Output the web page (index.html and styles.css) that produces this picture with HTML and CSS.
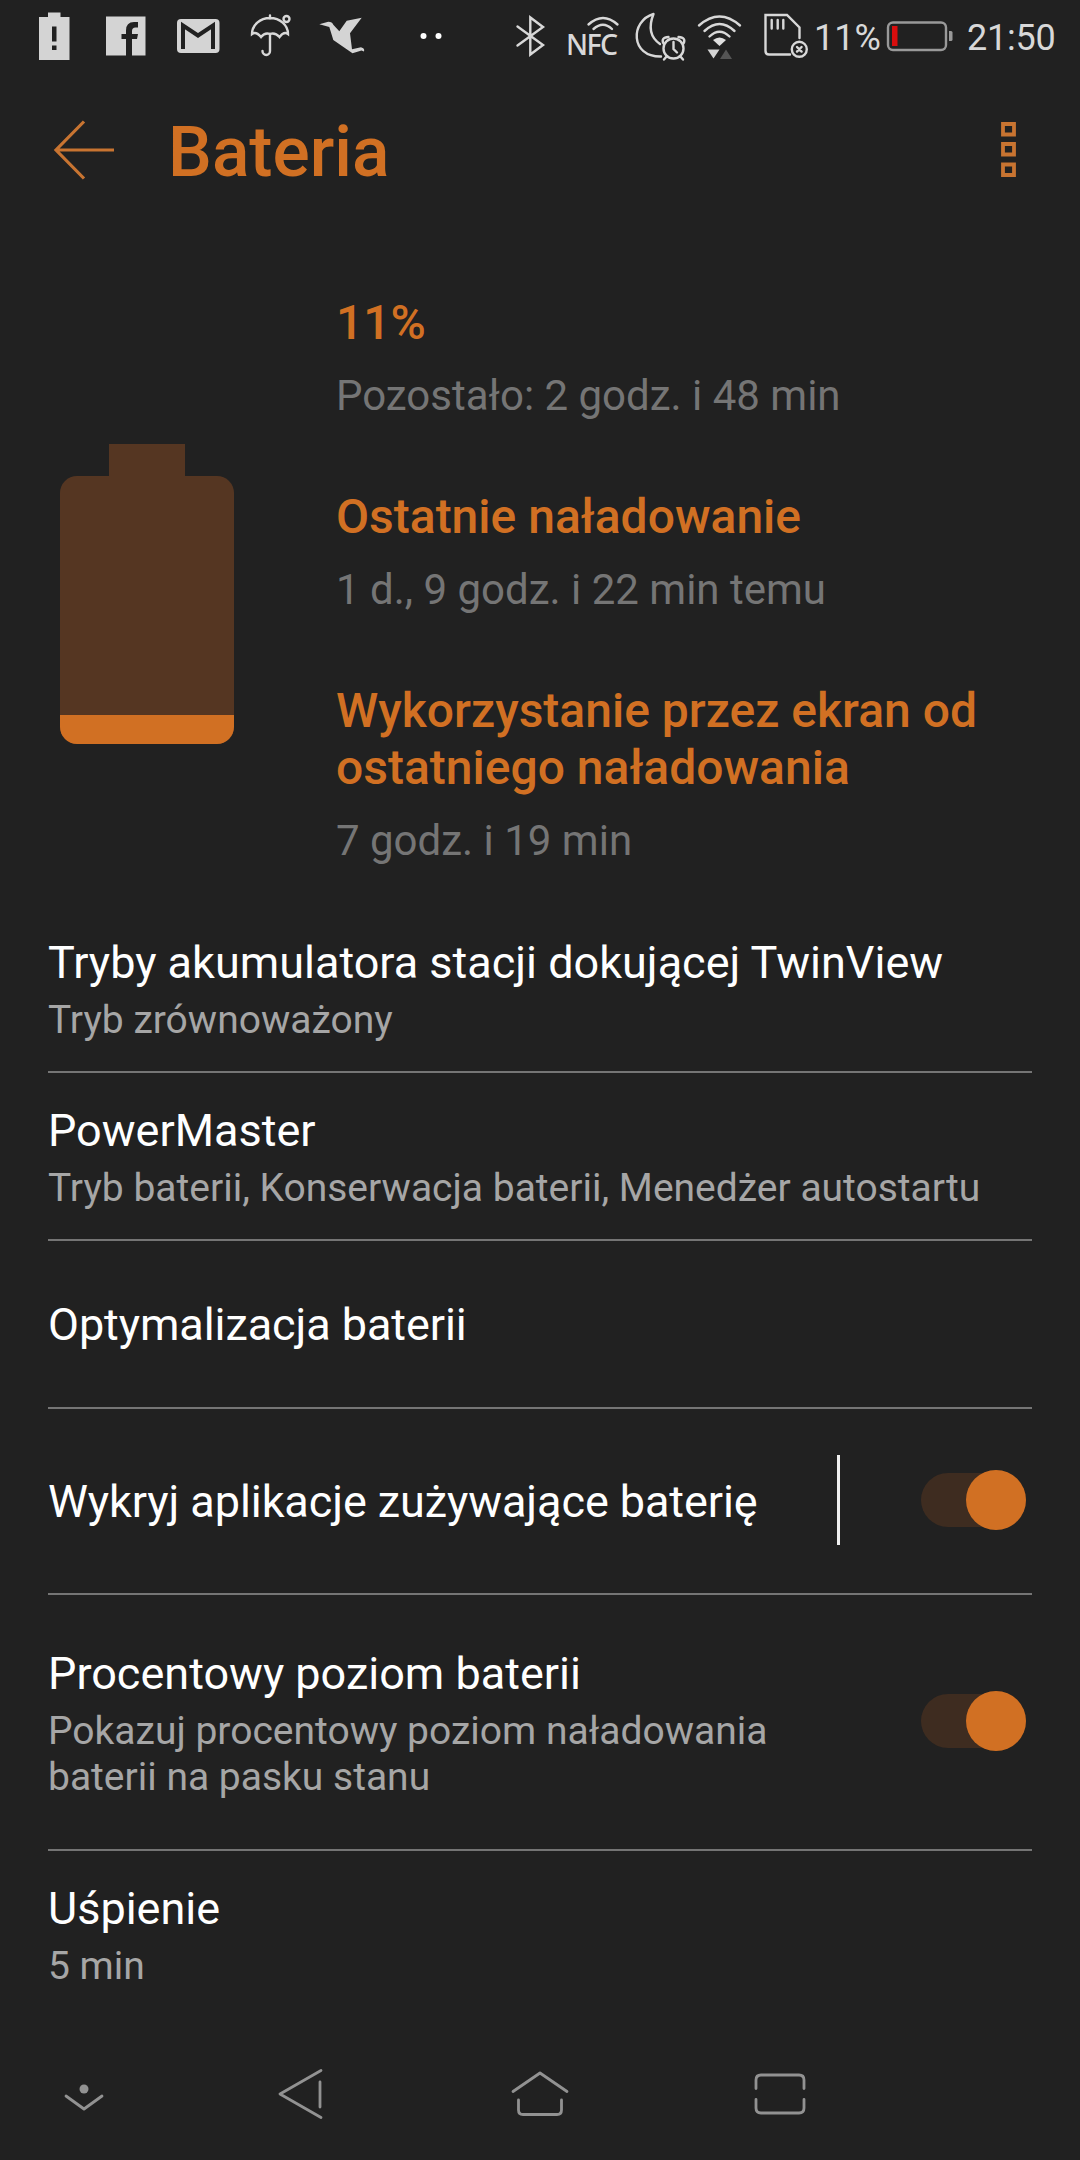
FILE: index.html
```html
<!DOCTYPE html>
<html lang="pl">
<head>
    <meta charset="UTF-8">
    <meta name="viewport" content="width=device-width, initial-scale=1.0">
    <title>Bateria</title>
    <link rel="stylesheet" href="styles.css">
</head>
<body>
    <div class="status-bar">
        <!-- notifications -->
        <svg class="status-left" width="420" height="72" viewBox="30 0 420 72">
            <path fill="#d4d4d4" fill-rule="evenodd" d="M39 17h9v-4.500h12.500V17H69.500v43H39zM52 26.500v15h4.500v-15zM52 45.500v4.500h4.500v-4.500z"/>
            <path fill="#d4d4d4" d="M106 16.500h39.500v39H132V39h5l1-5h-6v-3q0-3.500 3.500-3.500H138V22h-4q-8 0-8 8.500V34h-4.500v5h4.500v16.500h-20z"/>
            <rect x="177" y="19" width="42.500" height="34" rx="4" fill="#d4d4d4"/>
            <path class="gmail-m" d="M183 49V25.500l15 10 15-10V49"/>
            <g class="line-icon">
                <path d="M270 15.500v3M252 34a18 16 0 0 1 36 0q-4-3-8.500 3-4.500-5-9.500-3-5-2-9 3-5-6-9-3zM270 34v17a3.600 3.800 0 0 1-7.500 0"/>
                <circle cx="286.500" cy="19" r="3"/>
            </g>
            <path fill="#d4d4d4" d="M319.300 24.300l9-2.600q4 0 5 3l6 6.500 7.400-10.500 15-3-11.700 15.600 2 16 9-2q4 1 3 4.200l-2.500-1-9 2.800L333.300 40l-4-13z"/>
            <circle cx="423.500" cy="36" r="3" fill="#fff"/>
            <circle cx="438.500" cy="36" r="3" fill="#fff"/>
        </svg>
        <!-- system icons -->
        <svg class="status-right" width="300" height="72" viewBox="512 0 300 72">
            <g class="line-icon">
                <path d="M517.500 26.500L543 45l-12.700 9.500v-37L543 27l-25.500 18.500"/>
                <path d="M588.500 24.500q14.500-13 29 0M593.500 29q9.500-8.500 18.500 0"/>
                <path d="M653.500 14C630 21 630 57 661 56.500M653.500 14q-8 20 6.500 30"/>
                <circle cx="673.500" cy="48.500" r="10"/>
                <path d="M663.500 43.500q-3-6 5-6.500M683.500 43.500q3-6-5-6.500M667 56l-3 3.500M680 56l3 3.500M673.500 42v7l3.500 3.500"/>
                <path d="M699 25.500q20.500-18 41 0M704.500 31q15-14 30 0M709.500 36.500q10-9.500 20 0"/>
                <path d="M790 54.500h-21q-3.500 0-3.500-3.500V15H787l12.500 12.500V38M771.700 20v8.500M777.700 20v8.500M783.300 20v8.500"/>
                <circle cx="799.300" cy="49.300" r="7.500"/>
                <path d="M797 47l4.600 4.600M801.600 47l-4.600 4.600"/>
            </g>
            <text class="nfc" x="566" y="54.500" textLength="52">NFC</text>
            <path fill="#e0e0e0" d="M713 40q6.500-5 13 0l-6.500 6z"/>
            <path fill="#d4d4d4" d="M707.500 49.500h12l-6 9z"/>
            <path fill="#555" d="M720 59h12l-6-9.500z"/>
        </svg>
        <span class="status-percent">11%</span>
        <svg class="status-battery" width="68" height="34" viewBox="886 19 68 34">
            <rect x="888" y="22.500" width="58" height="27.500" rx="5" fill="none" stroke="#999" stroke-width="2.400"/>
            <rect x="892" y="26" width="5.500" height="20" fill="#d90d0d"/>
            <path fill="#999" d="M949 31h2q1.500 0 1.500 1.500v7q0 1.500-1.500 1.500h-2z"/>
        </svg>
        <span class="clock">21:50</span>
    </div>

    <div class="header">
        <svg class="back" width="64" height="64" viewBox="52 118 64 64">
            <path d="M84 121.500L56 150l28 28.500M56 150h58"/>
        </svg>
        <h1>Bateria</h1>
        <svg class="menu" width="15" height="56" viewBox="1001 122 15 56">
            <path d="M1003 124h11v10.500h-11zM1003 144h11v10.500h-11zM1003 164.500h11V175h-11z"/>
        </svg>
    </div>

    <div class="summary">
        <div class="battery">
            <div class="battery-cap"></div>
            <div class="battery-body">
                <div class="battery-level" style="height: 11%"></div>
            </div>
        </div>
        <div class="stats">
            <h2>11%</h2>
            <p>Pozostało: 2 godz. i 48 min</p>
            <h2>Ostatnie naładowanie</h2>
            <p>1 d., 9 godz. i 22 min temu</p>
            <h2>Wykorzystanie przez ekran od<br>ostatniego naładowania</h2>
            <p>7 godz. i 19 min</p>
        </div>
    </div>

    <div class="settings">
        <div class="row">
            <div class="label">
                <h3>Tryby akumulatora stacji dokującej TwinView</h3>
                <p>Tryb zrównoważony</p>
            </div>
        </div>
        <div class="row">
            <div class="label">
                <h3>PowerMaster</h3>
                <p>Tryb baterii, Konserwacja baterii, Menedżer autostartu</p>
            </div>
        </div>
        <div class="row row-single">
            <div class="label">
                <h3>Optymalizacja baterii</h3>
            </div>
        </div>
        <div class="row row-single row-detect">
            <div class="label">
                <h3>Wykryj aplikacje zużywające baterię</h3>
            </div>
            <div class="divider"></div>
            <div class="switch"><div class="thumb"></div></div>
        </div>
        <div class="row row-percent">
            <div class="label">
                <h3>Procentowy poziom baterii</h3>
                <p>Pokazuj procentowy poziom naładowania<br>baterii na pasku stanu</p>
            </div>
            <div class="switch"><div class="thumb"></div></div>
        </div>
        <div class="row row-last">
            <div class="label">
                <h3>Uśpienie</h3>
                <p>5 min</p>
            </div>
        </div>
    </div>

    <div class="nav-bar">
        <svg class="nav-hide" width="44" height="60" viewBox="62 2064 44 60">
            <circle cx="84" cy="2089" r="4.500" fill="#929292"/>
            <path d="M66 2096l18 13 18-13"/>
        </svg>
        <svg class="nav-back" width="48" height="60" viewBox="276 2064 48 60">
            <path d="M321 2070.500L280 2094l41 23.500M320 2082v25"/>
        </svg>
        <svg class="nav-home" width="60" height="60" viewBox="510 2064 60 60">
            <path d="M513 2091.500l27-18.500 27 18.500M518.500 2100v10q0 4.500 4.500 4.500h34q4.500 0 4.500-4.500v-10"/>
        </svg>
        <svg class="nav-recent" width="54" height="60" viewBox="753 2064 54 60">
            <path d="M756 2088.500V2080q0-5 5-5h38q5 0 5 5v8.500M756 2099.500v8.500q0 5 5 5h38q5 0 5-5v-8.500"/>
        </svg>
    </div>
</body>
</html>
```

FILE: styles.css
```css
* {
    box-sizing: border-box;
}
body {
    margin: 0;
    width: 1080px;
    height: 2160px;
    display: flex;
    flex-direction: column;
    overflow: hidden;
    font-family: Roboto, sans-serif;
    background-color: #212121;
    color: #fff;
}
h1, h2, h3, p {
    margin: 0;
}
svg {
    display: block;
    flex: none;
}

/* status bar */
.status-bar {
    display: flex;
    align-items: center;
    height: 72px;
    padding-left: 30px;
    font-size: 36px;
    line-height: 42px;
    color: #d8d8d8;
}
.status-right {
    margin-left: 62px;
}
.line-icon {
    fill: none;
    stroke: #d8d8d8;
    stroke-width: 2.4;
    stroke-linecap: round;
}
.gmail-m {
    fill: none;
    stroke: #212121;
    stroke-width: 4;
}
.nfc {
    font-family: "Noto Sans", sans-serif;
    font-size: 28.5px;
    font-weight: 500;
    fill: #d8d8d8;
}
.status-percent {
    width: 74px;
    padding: 3px 0 0 2px;
}
.clock {
    margin-left: 13px;
    padding-top: 3px;
    letter-spacing: -0.2px;
}

/* title */
.header {
    display: flex;
    align-items: center;
    height: 156px;
    padding: 0 64px 0 52px;
}
.back {
    fill: none;
    stroke: #c87431;
    stroke-width: 3.2;
}
.menu {
    margin-left: auto;
    fill: none;
    stroke: #c87431;
    stroke-width: 3.8;
}
h1 {
    margin-left: 52px;
    padding-top: 5px;
    font-size: 69.5px;
    font-weight: 500;
    line-height: 78px;
    color: #d17023;
}

/* battery summary */
.summary {
    display: flex;
    height: 677px;
    padding-left: 60px;
}
.battery {
    width: 174px;
    margin: 216px 102px 0 0;
}
.battery-cap {
    width: 76px;
    height: 32px;
    margin-left: 49px;
    background-color: #553622;
}
.battery-body {
    display: flex;
    align-items: flex-end;
    height: 268px;
    border-radius: 17px;
    overflow: hidden;
    background-color: #553622;
}
.battery-level {
    width: 100%;
    background-color: #d17023;
}
.stats {
    padding-top: 66px;
}
.stats h2 {
    font-size: 48px;
    font-weight: 500;
    line-height: 57px;
    color: #d17023;
}
.stats p {
    margin: 21px 0 68px;
    font-size: 42px;
    line-height: 48px;
    color: #757575;
}

/* settings list */
.settings {
    height: 1123px;
    padding: 0 48px;
}
.row {
    display: flex;
    align-items: center;
    height: 168px;
    border-bottom: 2px solid #757575;
}
.label {
    flex: 1;
    padding-top: 2px;
}
.row-single .label {
    padding-top: 0;
    letter-spacing: -0.08px;
}
.row h3 {
    font-size: 45px;
    font-weight: 400;
    line-height: 53px;
    white-space: nowrap;
}
.row p {
    margin-top: 8px;
    font-size: 39px;
    line-height: 46px;
    color: #a6a6a6;
    white-space: nowrap;
}
.row-detect {
    height: 186px;
}
.row-percent {
    height: 256px;
}
.row-last {
    height: 166px;
    border-bottom: none;
}
.divider {
    width: 3px;
    height: 90px;
    margin: 0 81px 2px 0;
    background-color: #f0f0f0;
}
.switch {
    display: flex;
    align-items: center;
    justify-content: flex-end;
    width: 105px;
    height: 54px;
    margin: 0 6px 2px 0;
    border-radius: 27px;
    background-color: #3e2c20;
}
.thumb {
    flex: none;
    width: 60px;
    height: 60px;
    border-radius: 50%;
    background-color: #d17023;
}

/* navigation */
.nav-bar {
    display: flex;
    align-items: center;
    height: 132px;
    padding-left: 62px;
    fill: none;
    stroke: #929292;
    stroke-width: 2.8;
    stroke-linecap: round;
    stroke-linejoin: round;
}
.nav-hide circle {
    stroke: none;
}
.nav-back {
    margin-left: 170px;
}
.nav-home {
    margin-left: 186px;
}
.nav-recent {
    margin-left: 183px;
}
```
